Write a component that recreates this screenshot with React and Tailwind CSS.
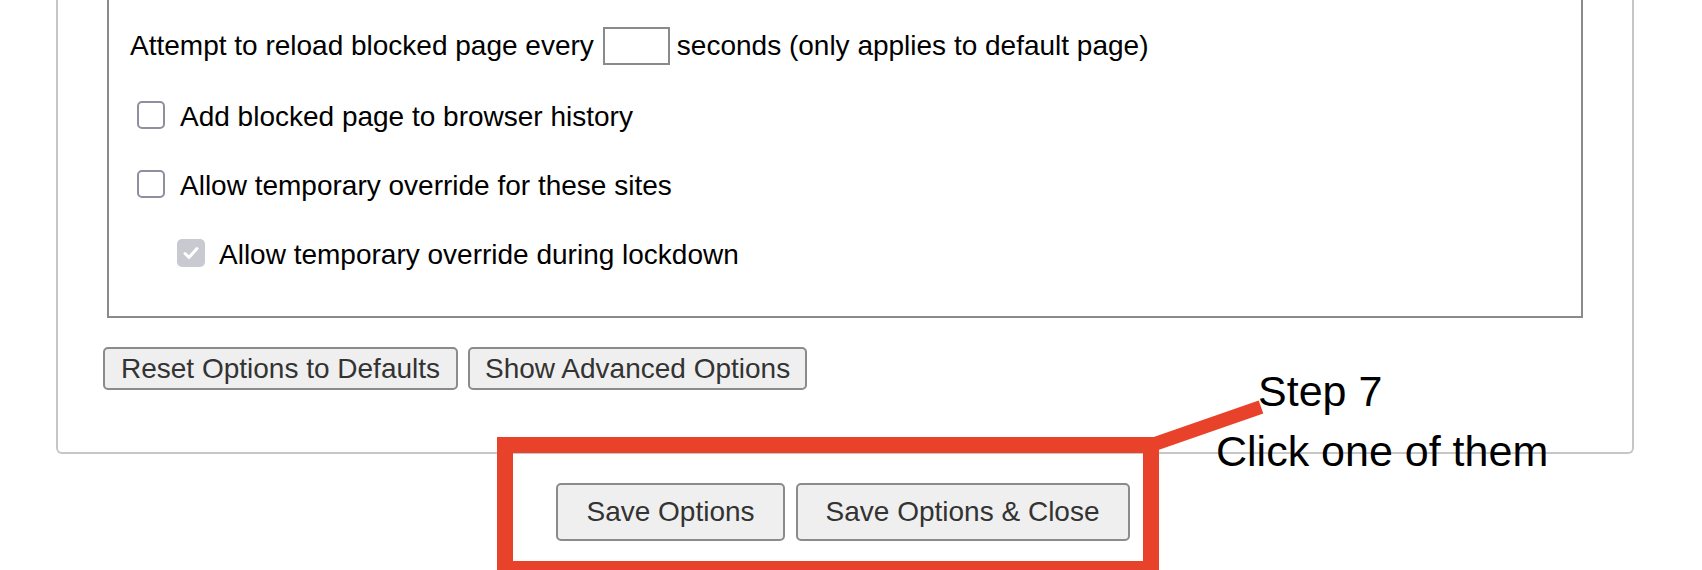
import React from 'react';

const Box = ({ checked, disabled }) => {
    if (checked && disabled) {
        return (
            <span className="w-[28px] h-[28px] rounded-[5px] bg-[#c9c9d1] flex items-center justify-center shrink-0 mb-[4px]">
                <svg width="18" height="18" viewBox="0 0 18 18" fill="none">
                    <path d="M3 9.5l4 4 8-9" stroke="#ffffff" strokeWidth="3" strokeLinecap="round" strokeLinejoin="round" />
                </svg>
            </span>
        );
    }
    return <span className="w-[28px] h-[28px] rounded-[5px] border-2 border-[#8f8f9d] bg-white shrink-0 mb-[4px]" />;
};

const Btn = ({ children, className = '' }) => (
    <button className={`bg-[#efefef] border-2 border-[#8b8b8b] rounded-[5px] text-[#333333] text-[28px] leading-none ${className}`}>
        {children}
    </button>
);

const App = () => {
    return (
        <div className="relative w-full h-[570px] overflow-hidden bg-white text-black font-['Liberation_Sans',Arial,sans-serif] text-[28px]">
            {/* options panel */}
            <div className="ml-[56px] w-[1578px] border-2 border-t-0 border-[#c6c6c6] rounded-b-[6px] pb-[62px]">
                <div className="mx-[49px] border-2 border-t-0 border-[#8a8a8a] pl-[21px] pt-[27px] pb-[42px]">
                    <div className="h-[38px] flex items-center">
                        <span>Attempt to reload blocked page every</span>
                        <span className="ml-[9px] mr-[7px] w-[67px] h-[38px] border-2 border-[#8a8a8a] bg-white" />
                        <span>seconds (only applies to default page)</span>
                    </div>
                    <div className="h-[38px] mt-[33px] flex items-center pl-[7px] gap-[15px]">
                        <Box />
                        <span>Add blocked page to browser history</span>
                    </div>
                    <div className="h-[38px] mt-[31px] flex items-center pl-[7px] gap-[15px]">
                        <Box />
                        <span>Allow temporary override for these sites</span>
                    </div>
                    <div className="h-[38px] mt-[31px] flex items-center pl-[47px] gap-[14px]">
                        <Box checked disabled />
                        <span>Allow temporary override during lockdown</span>
                    </div>
                </div>
                <div className="flex gap-[10px] ml-[45px] mt-[29px]">
                    <Btn className="h-[43px] px-[16px]">Reset Options to Defaults</Btn>
                    <Btn className="h-[43px] px-[15px]">Show Advanced Options</Btn>
                </div>
            </div>

            <div className="ml-[56px] w-[1574px] flex justify-center gap-[11px] mt-[29px]">
                <Btn className="h-[58px] px-[28px]">Save Options</Btn>
                <Btn className="h-[58px] px-[28px]">Save Options &amp; Close</Btn>
            </div>

            {/* annotation overlay */}
            <div className="absolute left-[497px] top-[437px] w-[662px] h-[140px] border-[16px] border-[#e8432a]" />
            <svg className="absolute left-0 top-0 pointer-events-none" width="1702" height="570">
                <line x1="1146" y1="447" x2="1261" y2="407" stroke="#e8432a" strokeWidth="14" />
            </svg>
            <div className="absolute left-[1258px] top-[370px] text-[43px] leading-none text-black">Step 7</div>
            <div className="absolute left-[1216px] top-[430px] text-[43px] leading-none text-black">Click one of them</div>
        </div>
    );
};

export default App;
